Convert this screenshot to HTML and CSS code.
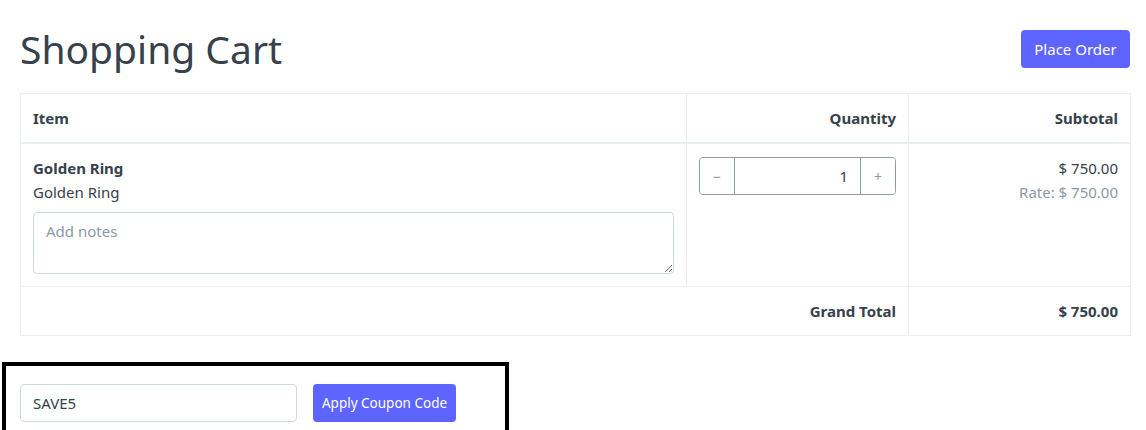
FILE: index.html
```html
<!DOCTYPE html>
<html>
<head>
<meta charset="utf-8">
<link rel="stylesheet" href="styles.css">
</head>
<body>
<div class="page">
  <div class="header">
    <h1 class="title">Shopping Cart</h1>
    <button class="btn btn-primary place-order">Place Order</button>
  </div>
  <table class="cart">
    <thead>
      <tr>
        <th class="col-item">Item</th>
        <th class="col-qty right">Quantity</th>
        <th class="col-sub right">Subtotal</th>
      </tr>
    </thead>
    <tbody>
      <tr class="item-row">
        <td>
          <div class="item-name">Golden Ring</div>
          <div class="item-desc">Golden Ring</div>
          <textarea class="notes" placeholder="Add notes"></textarea>
        </td>
        <td>
          <div class="qty-group">
            <button class="qty-btn">&minus;</button>
            <input class="qty-input" type="text" value="1">
            <button class="qty-btn">+</button>
          </div>
        </td>
        <td class="right">
          <div class="amount">$ 750.00</div>
          <div class="rate">Rate: $ 750.00</div>
        </td>
      </tr>
      <tr class="total-row">
        <td colspan="2" class="right bold">Grand Total</td>
        <td class="right bold">$ 750.00</td>
      </tr>
    </tbody>
  </table>
  <div class="coupon-box">
    <input class="coupon-input" type="text" value="SAVE5">
    <button class="btn btn-primary coupon-btn">Apply Coupon Code</button>
  </div>
</div>
</body>
</html>
```
FILE: styles.css
```css
* { box-sizing: border-box; }
html, body { margin: 0; padding: 0; background: #fff; }
body {
  font-family: "Noto Sans", "Open Sans", sans-serif;
  color: #36414c;
  font-size: 15px;
}
.page { padding-top: 20px; }
.header {
  display: flex;
  justify-content: space-between;
  align-items: center;
  padding: 0 16px 0 20px;
  height: 56px;
}
.title {
  margin: 0;
  font-size: 39px;
  font-weight: 400;
  color: #36414c;
  line-height: 1;
}
.btn {
  font-family: inherit;
  border: none;
  border-radius: 4px;
  cursor: pointer;
}
.btn-primary { background: #5e64ff; color: #fff; }
.place-order {
  height: 38px;
  width: 109px;
  font-size: 15px;
  padding: 0;
  margin-top: 1px;
}
.cart {
  margin: 17px 16px 0 20px;
  width: 1110px;
  border-collapse: collapse;
  table-layout: fixed;
}
.cart th, .cart td {
  border: 1px solid #ebeef0;
  padding: 12px;
  vertical-align: top;
  line-height: 24px;
}
.cart thead th {
  border-bottom: 2px solid #ebeef0;
  font-weight: 700;
  text-align: left;
  height: 49px;
  vertical-align: middle;
}
.col-item { width: 666px; }
.col-qty { width: 222px; }
.col-sub { width: 222px; }
.cart .right { text-align: right; }
.bold { font-weight: 700; }
.item-name { font-weight: 700; }
.notes {
  display: block;
  width: 100%;
  height: 62px;
  margin-top: 8px;
  border: 1px solid #d1d8dd;
  border-radius: 4px;
  padding: 8px 12px;
  font-family: inherit;
  font-size: 15px;
  color: #36414c;
}
.notes::placeholder { color: #8d99a6; }
.qty-group {
  display: flex;
  height: 38px;
  border: 1px solid #8d99a6;
  border-radius: 4px;
  overflow: hidden;
  margin-top: 1px;
}
.qty-btn {
  width: 34px;
  flex: none;
  background: #fff;
  border: none;
  color: #8d99a6;
  font-size: 14px;
  font-family: inherit;
  padding: 0;
}
.qty-input {
  flex: 1;
  min-width: 0;
  border: none;
  border-left: 1px solid #8d99a6;
  border-right: 1px solid #8d99a6;
  text-align: right;
  padding: 0 12px;
  font-family: inherit;
  font-size: 15px;
  color: #36414c;
}
.rate { color: #8d99a6; }
.total-row td { height: 49px; vertical-align: middle; }
.coupon-box {
  margin: 26px 0 0 2px;
  width: 507px;
  height: 80px;
  border: 4px solid #000;
  border-bottom: none;
  padding: 18px 0 0 14px;
  display: flex;
  gap: 16px;
  align-items: flex-start;
}
.coupon-input {
  width: 277px;
  height: 38px;
  border: 1px solid #d1d8dd;
  border-radius: 4px;
  padding: 0 12px;
  font-family: inherit;
  font-size: 15px;
  color: #36414c;
}
.coupon-btn {
  width: 143px;
  height: 38px;
  font-size: 13.5px;
  padding: 0;
}
```
